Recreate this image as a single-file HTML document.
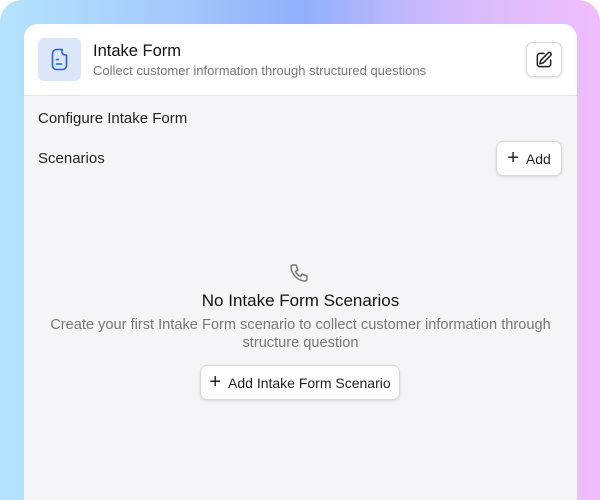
<!DOCTYPE html><html><head><style>
*{margin:0;padding:0;box-sizing:border-box}
html,body{width:600px;height:500px;overflow:hidden}
body{font-family:"Liberation Sans",sans-serif;background:#fff;position:relative}
.outer{position:absolute;left:0;top:0;width:600px;height:500px;border-radius:22px 22px 0 0;background:linear-gradient(90deg,#b5e3fd 0%,#a4c8fb 30%,#8fb0fb 50%,#d4bbfb 75%,#f0bdfb 100%)}
.card{position:absolute;left:24px;top:24px;width:553px;height:476px;border-radius:14px 14px 0 0;background:#f5f5f7;overflow:hidden}
.head{height:72px;background:#fff;border-bottom:1px solid #e3e3e8;position:relative}
.ib{position:absolute;left:14px;top:14px;width:43px;height:43px;border-radius:6px;background:#dbe6fb}
.t{position:absolute;left:69px;top:18px;font-size:16.5px;color:#111}
.s{position:absolute;left:69px;top:39px;font-size:13px;color:#777}
.btn{position:absolute;background:#fff;border:1px solid #d8d8dc;border-radius:7px;box-shadow:0 1px 3px rgba(0,0,0,.12);color:#222;font-size:14px;display:flex;align-items:center;justify-content:center;gap:7px}
.lab{position:absolute;left:14px;font-size:15px;color:#222}
</style></head><body>
<div class="outer"></div>
<div class="card">
 <div class="head">
  <div class="ib"><svg width="43" height="43" viewBox="0 0 43 43" fill="none" stroke="#2563d8" stroke-width="1.6" stroke-linecap="round"><path d="M24 11.5h-5.5a4 4 0 0 0-4 4v12a4 4 0 0 0 4 4h6a4 4 0 0 0 4-4v-10"/><path d="M24 11.5v2.5a3 3 0 0 0 3 3h1.5"/><path d="M18.5 21.5h2M18.5 26h5"/></svg></div>
  <div class="t">Intake Form</div>
  <div class="s">Collect customer information through structured questions</div>
  <div class="btn" style="left:502px;top:18px;width:36px;height:35px"><svg width="20" height="20" viewBox="0 0 24 24" fill="none" stroke="#222" stroke-width="1.8" stroke-linecap="round" stroke-linejoin="round"><path d="M12 4H7a3 3 0 0 0-3 3v10a3 3 0 0 0 3 3h10a3 3 0 0 0 3-3v-5"/><path d="M17 3.5a2.1 2.1 0 0 1 3 3L11 15.5l-4 1 1-4z"/></svg></div>
 </div>
 <div class="lab" style="top:86px">Configure Intake Form</div>
 <div class="lab" style="top:126px">Scenarios</div>
 <div class="btn" style="left:472px;top:117px;width:66px;height:35px"><span style="font-size:20px;font-weight:300">+</span>Add</div>
 <svg style="position:absolute;left:264px;top:238px" width="24" height="24" viewBox="0 0 24 24" fill="none" stroke="#777" stroke-width="1.5" stroke-linejoin="round"><path d="M5 3h3l2 5-2.5 1.5a11 11 0 0 0 5 5L14 12l5 2v3a2 2 0 0 1-2 2A15 15 0 0 1 3 5a2 2 0 0 1 2-2z"/></svg>
 <div style="position:absolute;left:0;width:553px;top:267px;text-align:center;font-size:17px;color:#111">No Intake Form Scenarios</div>
 <div style="position:absolute;left:0;width:553px;top:292px;text-align:center;font-size:14.6px;color:#777;line-height:18px">Create your first Intake Form scenario to collect customer information through<br>structure question</div>
 <div class="btn" style="left:176px;top:341px;width:200px;height:35px"><span style="font-size:20px;font-weight:300">+</span>Add Intake Form Scenario</div>
</div>
</body></html>
